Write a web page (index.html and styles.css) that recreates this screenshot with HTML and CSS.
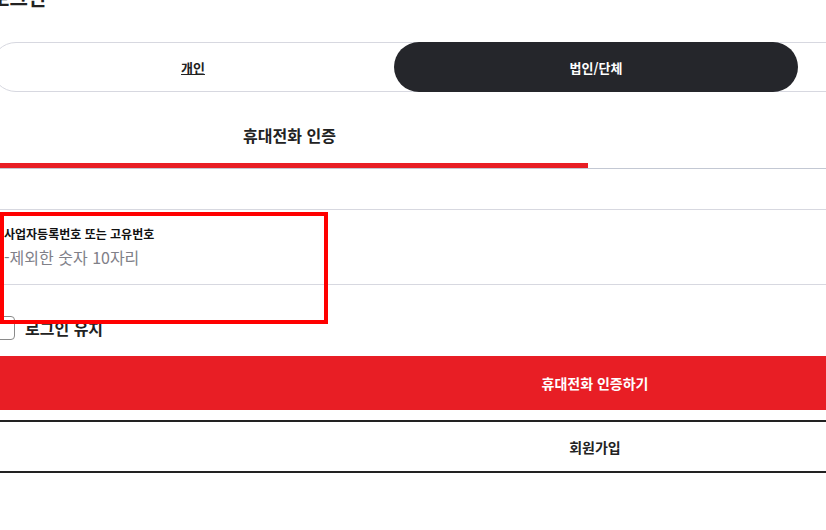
FILE: index.html
```html
<!DOCTYPE html>
<html lang="ko">
<head>
  <meta charset="UTF-8" />
  <title>로그인</title>
  <link rel="stylesheet" href="styles.css">
</head>
<body>
  <div class="login">
    <h1 class="login-title">로그인</h1>

    <div class="member-type">
      <a class="type-item" href="#">개인</a>
      <a class="type-item active" href="#">법인/단체</a>
    </div>

    <div class="auth-tabs">
      <div class="auth-tab active">휴대전화 인증</div>
      <div class="auth-tab"></div>
    </div>

    <div class="field">
      <label class="field-label" for="bizNo">사업자등록번호 또는 고유번호</label>
      <input type="text" id="bizNo" class="field-input" placeholder="-제외한 숫자 10자리" />
    </div>

    <label class="keep-login">
      <span class="check-box"></span>
      <span class="check-text">로그인 유지</span>
    </label>

    <button class="btn btn-primary">휴대전화 인증하기</button>
    <button class="btn btn-outline">회원가입</button>
  </div>

  <!-- highlight box -->
  <div class="highlight"></div>
</body>
</html>
```

FILE: styles.css
```css
html, body {
  margin: 0;
  padding: 0;
  background: #fff;
  overflow: hidden;
}
body {
  font-family: "Noto Sans CJK KR", "Noto Sans", sans-serif;
  color: #222;
  width: 826px;
  height: 530px;
  position: relative;
}
.login {
  margin-left: -9px;
  width: 1208px;
}
.login-title {
  margin: -14px 0 0 0;
  font-size: 20px;
  line-height: 24px;
  font-weight: 700;
  height: 24px;
}
.member-type {
  margin-top: 32px;
  display: flex;
  height: 48px;
  border: 1px solid #d7d8e0;
  border-radius: 25px;
  box-sizing: content-box;
}
.type-item {
  width: 402px;
  display: flex;
  align-items: center;
  justify-content: center;
  font-size: 13px;
  font-weight: 700;
  color: #222;
}
.type-item.active {
  width: 404px;
  margin: -1px 0;
  height: 50px;
  background: #25262b;
  color: #fff;
  border-radius: 25px;
  text-decoration: none;
}
.auth-tabs {
  margin-top: 9px;
  display: grid;
  grid-template-columns: 597px 1fr;
  border-bottom: 1px solid #c3c8d3;
}
.auth-tab {
  height: 57px;
  padding-top: 5px;
  display: flex;
  align-items: center;
  justify-content: center;
  font-size: 16px;
  font-weight: 700;
}
.auth-tab.active {
  border-bottom: 5px solid #e81e25;
  height: 57px;
}
.field {
  margin-top: 40px;
  border-top: 1px solid #d7d8e0;
  border-bottom: 1px solid #d7d8e0;
  height: 74px;
  padding: 0 13px;
  display: flex;
  flex-direction: column;
}
.field-label {
  margin-top: 16px;
  font-size: 12px;
  font-weight: 700;
  line-height: 16px;
  color: #111;
}
.field-input {
  margin-top: 5px;
  border: none;
  outline: none;
  padding: 0;
  font-family: inherit;
  font-size: 16px;
  line-height: 20px;
  color: #222;
  background: transparent;
}
.field-input::placeholder {
  color: #808088;
}
.keep-login {
  margin-top: 31px;
  display: flex;
  align-items: center;
  gap: 10px;
  height: 24px;
  cursor: pointer;
}
.check-box {
  width: 22px;
  height: 22px;
  border: 1px solid #8a8a8a;
  border-radius: 4px;
}
.check-text {
  font-size: 16px;
  font-weight: 700;
  color: #222;
}
.btn {
  display: block;
  width: 100%;
  font-family: inherit;
  font-size: 14px;
  font-weight: 700;
  cursor: pointer;
  border-radius: 3px;
}
.btn-primary {
  margin-top: 16px;
  height: 54px;
  background: #e81e25;
  color: #fff;
  border: none;
}
.btn-outline {
  margin-top: 10px;
  height: 53px;
  background: #fff;
  color: #222;
  border: 2px solid #222;
}
.highlight {
  position: absolute;
  left: 0;
  top: 212px;
  width: 320px;
  height: 104px;
  border: 4px solid #ff0000;
}
```
